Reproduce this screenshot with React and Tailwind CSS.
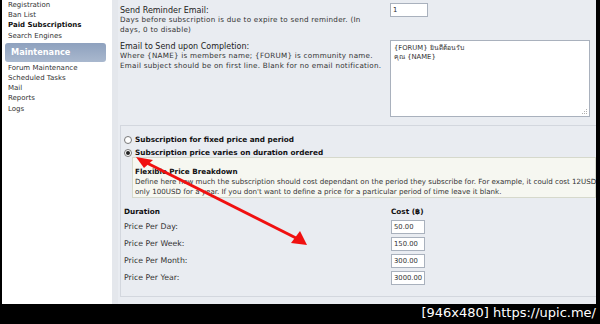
import React from "react";

const F = { fontFamily: '"DejaVu Sans", "Noto Sans", sans-serif' };

function Input({ value, w = "w-[34px]" }) {
  return (
    <div className={`${w} h-[14px] bg-white border border-[#a9b1bd] text-[6.8px] text-[#333] leading-[12px] pl-[2px] overflow-hidden whitespace-nowrap`}>
      {value}
    </div>
  );
}

export default function App() {
  const side = ["Forum Maintenance", "Scheduled Tasks", "Mail", "Reports", "Logs"];
  const rows = [
    ["Price Per Day:", "50.00"],
    ["Price Per Week:", "150.00"],
    ["Price Per Month:", "300.00"],
    ["Price Per Year:", "3000.00"],
  ];
  return (
    <div className="w-[600px] h-[324px] bg-black relative overflow-hidden" style={F}>
      <div className="flex h-[304px] ml-[2px] w-[594px]">
        {/* sidebar */}
        <div className="w-[110px] bg-white shrink-0 text-[7px] text-[#333] overflow-hidden">
          <div className="mt-[0px] pl-[6px] leading-[10.2px]">
            <div>Registration</div>
            <div>Ban List</div>
            <div className="font-bold text-[#111]">Paid Subscriptions</div>
            <div>Search Engines</div>
          </div>
          <div className="ml-[3px] mr-[6px] mt-[2px] h-[19px] rounded-[3px] bg-gradient-to-b from-[#8ea1be] to-[#a9b8ce] text-white font-bold text-[8.2px] leading-[19px] pl-[6px]">
            Maintenance
          </div>
          <div className="pl-[6px] pt-[1px] leading-[10.2px]">
            {side.map((s) => (
              <div key={s}>{s}</div>
            ))}
          </div>
        </div>
        <div className="w-[6px] bg-[#e4e7ec] shrink-0" />
        {/* main */}
        <div className="flex-1 bg-[#e9ecf1] text-[#333] overflow-hidden">
          <div className="flex pl-[2px] pt-[3px]">
            <div className="w-[270px]">
              <div className="text-[8px] text-[#222] leading-[9px] mt-[3px]">Send Reminder Email:</div>
              <div className="text-[7.2px] tracking-[0.25px] leading-[10px] whitespace-nowrap">
                Days before subscription is due to expire to send reminder. (In
                <br />
                days, 0 to disable)
              </div>
            </div>
            <Input value="1" w="w-[38px]" />
          </div>
          <div className="flex pl-[2px] mt-[5px]">
            <div className="w-[270px]">
              <div className="text-[8px] text-[#222] leading-[9px] mt-[2px]">Email to Send upon Completion:</div>
              <div className="text-[7.2px] tracking-[0.25px] leading-[10px] whitespace-nowrap">
                Where {"{NAME}"} is members name; {"{FORUM}"} is community name.
                <br />
                Email subject should be on first line. Blank for no email notification.
              </div>
            </div>
            <div className="w-[200px] h-[77px] bg-white border border-[#a9b1bd] text-[6.8px] leading-[9px] text-[#333] px-[3px] pt-[3px] relative z-10">
              <div>{"{FORUM}"} ยินดีต้อนรับ</div>
              <div>คุณ {"{NAME}"}</div>
              <svg className="absolute right-[1px] bottom-[1px]" width="6" height="6">
                <rect x="4" y="0" width="1" height="1" fill="#b0b0b0" />
                <rect x="2" y="2" width="1" height="1" fill="#b0b0b0" />
                <rect x="4" y="2" width="1" height="1" fill="#b0b0b0" />
                <rect x="0" y="4" width="1" height="1" fill="#b0b0b0" />
                <rect x="2" y="4" width="1" height="1" fill="#b0b0b0" />
                <rect x="4" y="4" width="1" height="1" fill="#b0b0b0" />
              </svg>
            </div>
          </div>
          {/* fieldset */}
          <div className="mt-[8px] ml-[2px] h-[172px] border-l border-b border-t border-[#d3d7de] pl-[3px] pt-[7px]">
            <div className="flex items-center gap-[3px] text-[7.3px] font-bold text-[#111] leading-[13px]">
              <span className="w-[8px] h-[8px] rounded-full border border-[#777] bg-white" />
              Subscription for fixed price and period
            </div>
            <div className="flex items-center gap-[3px] text-[7.3px] font-bold text-[#111] leading-[13px]">
              <span className="w-[8px] h-[8px] rounded-full border border-[#777] bg-white flex items-center justify-center">
                <span className="w-[4px] h-[4px] rounded-full bg-[#222]" />
              </span>
              Subscription price varies on duration ordered
            </div>
            <div className="ml-[8px] -mt-[2px] h-[41px] border border-[#d6d9cc] bg-[#f6f7f1] pl-[2px] pt-[9px] whitespace-nowrap">
              <div className="text-[7.2px] font-bold text-[#111] leading-[10px]">Flexible Price Breakdown</div>
              <div className="text-[7.1px] leading-[10px]">
                Define here how much the subscription should cost dependant on the period they subscribe for. For example, it could cost 12USD a month, but
                <br />
                only 100USD for a year. If you don't want to define a price for a particular period of time leave it blank.
              </div>
            </div>
            <div className="flex mt-[9px] text-[7.3px] font-bold text-[#111] leading-[10px]">
              <div className="w-[267px]">Duration</div>
              <div>Cost (฿)</div>
            </div>
            <div className="mt-[3px] flex flex-col gap-[3px]">
              {rows.map(([l, v]) => (
                <div key={l} className="flex items-center h-[14px]">
                  <div className="w-[267px] text-[7.8px] text-[#333]">{l}</div>
                  <Input value={v} />
                </div>
              ))}
            </div>
          </div>
        </div>
      </div>
      {/* red arrow */}
      <svg className="absolute left-0 top-0" width="600" height="324">
        <line x1="143" y1="161" x2="298" y2="239" stroke="#f01010" strokeWidth="3" />
        <polygon points="136,157 153,160 144,168" fill="#f01010" />
        <polygon points="307,245 291,243 300,231" fill="#f01010" />
      </svg>
      <div
        className="absolute right-[4px] bottom-[4px] text-white text-[13px] leading-[14px]"
        style={{ fontFamily: '"DejaVu Sans", sans-serif' }}
      >
        [946x480] https://upic.me/
      </div>
    </div>
  );
}
